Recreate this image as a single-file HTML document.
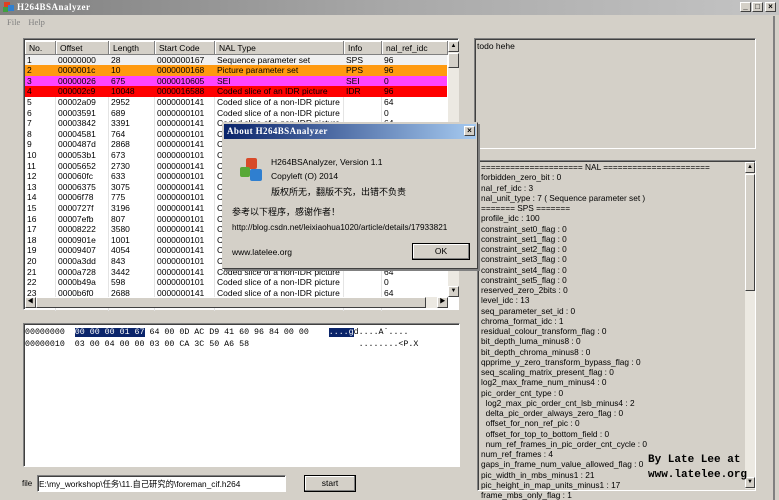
<!DOCTYPE html>
<html><head><meta charset="utf-8">
<style>
*{box-sizing:border-box;margin:0;padding:0}
body{width:779px;height:500px;overflow:hidden;background:#d4d0c8;font-family:"Liberation Sans","Noto Sans CJK SC",sans-serif;font-size:8.5px;color:#000;position:relative}
.abs{position:absolute}
.title{left:0;top:0;width:779px;height:15px;background:linear-gradient(90deg,#808080,#a8a8a8 50%,#c4c4c4)}
.title span{position:absolute;left:17px;top:2px;color:#fff;font:bold 9px "Liberation Serif",serif;letter-spacing:.5px}
.tbtn{position:absolute;top:2px;width:11px;height:10px;background:#d4d0c8;border:1px solid;border-color:#fff #404040 #404040 #fff;font:bold 8px "Liberation Sans";text-align:center;line-height:8px}
.menu{left:7px;top:17px;color:#808080;font:8.5px "Liberation Serif",serif;word-spacing:6px}
.sunk{border:1px solid;border-color:#808080 #fff #fff #808080;box-shadow:inset 1px 1px 0 #404040}
.list{left:23px;top:38px;width:436px;height:272px;background:#fff}
.hdr{position:absolute;top:2px;height:14px;background:#d4d0c8;border-right:1px solid #808080;border-bottom:1px solid #808080;box-shadow:inset 1px 1px 0 #fff;padding:2px 0 0 4px;font-size:8.5px}
.row{position:absolute;left:1px;width:422px;height:10.6px;line-height:10.6px;font-size:8.5px;white-space:nowrap}
.row span{position:absolute;top:0}
.vl{position:absolute;top:16px;width:1px;height:256px;background:#e4e4e4}
.sb{background:#ece9e2}
.arr{position:absolute;width:11px;height:11px;background:#d4d0c8;border:1px solid;border-color:#fff #404040 #404040 #fff;font-size:6px;text-align:center;line-height:9px}
.dlg{left:222px;top:122px;width:256px;height:147px;background:#d4d0c8;border:1px solid;border-color:#d4d0c8 #404040 #404040 #d4d0c8;box-shadow:2px 2px 0 #808080}
.dt{left:1px;top:1px;width:252px;height:15px;background:linear-gradient(90deg,#0a246a,#a6caf0)}
.dt span{position:absolute;left:3px;top:2px;color:#fff;font:bold 9px "Liberation Serif",serif;letter-spacing:.4px}
.txt{font-size:8.5px;white-space:nowrap}
.det{left:477px;top:160px;width:279px;height:331px;background:#d4d0c8;padding:1px 0 0 3px}
.det div{height:10.26px;line-height:10.26px;font-size:8.3px;white-space:nowrap}
.hex{font-family:"Liberation Mono",monospace;font-size:8.3px;white-space:pre}
</style></head><body>
<div class="abs title"><svg style="position:absolute;left:3px;top:2px" width="12" height="11"><rect x="1" y="0" width="6" height="6" fill="#e04020"/><rect x="5" y="3" width="6" height="6" fill="#3080d0"/><rect x="0" y="5" width="5" height="5" fill="#40a040"/></svg><span>H264BSAnalyzer</span>
<div class="tbtn" style="left:740px">_</div><div class="tbtn" style="left:752px">□</div><div class="tbtn" style="left:765px">×</div></div>
<div class="abs menu">File Help</div>

<div class="abs list sunk">
<div class="hdr" style="left:1px;width:31px">No.</div>
<div class="hdr" style="left:32px;width:53px">Offset</div>
<div class="hdr" style="left:85px;width:46px">Length</div>
<div class="hdr" style="left:131px;width:60px">Start Code</div>
<div class="hdr" style="left:191px;width:129px">NAL Type</div>
<div class="hdr" style="left:320px;width:38px">Info</div>
<div class="hdr" style="left:358px;width:66px">nal_ref_idc</div>
<div class="vl" style="left:31px"></div><div class="vl" style="left:84px"></div><div class="vl" style="left:130px"></div><div class="vl" style="left:190px"></div><div class="vl" style="left:319px"></div><div class="vl" style="left:357px"></div>
<div id="rows"></div>
<div class="abs sb" style="left:424px;top:2px;width:11px;height:256px"></div>
<div class="arr" style="left:424px;top:2px">▲</div>
<div class="arr" style="left:424px;top:14px;height:15px"></div>
<div class="arr" style="left:424px;top:247px">▼</div>
<div class="abs sb" style="left:1px;top:258px;width:423px;height:11px"></div>
<div class="arr" style="left:1px;top:258px">◀</div>
<div class="arr" style="left:12px;top:258px;width:390px"></div>
<div class="arr" style="left:413px;top:258px">▶</div>
</div>

<div class="abs sunk" style="left:474px;top:38px;width:282px;height:111px"><div class="txt" style="position:absolute;left:2px;top:2px">todo hehe</div></div>

<div class="abs det sunk">
<div>===================== NAL ======================</div>
<div>forbidden_zero_bit : 0</div><div>nal_ref_idc : 3</div><div>nal_unit_type : 7 ( Sequence parameter set )</div>
<div>======= SPS =======</div><div>profile_idc : 100</div>
<div>constraint_set0_flag : 0</div><div>constraint_set1_flag : 0</div><div>constraint_set2_flag : 0</div><div>constraint_set3_flag : 0</div><div>constraint_set4_flag : 0</div><div>constraint_set5_flag : 0</div>
<div>reserved_zero_2bits : 0</div><div>level_idc : 13</div><div>seq_parameter_set_id : 0</div><div>chroma_format_idc : 1</div><div>residual_colour_transform_flag : 0</div><div>bit_depth_luma_minus8 : 0</div><div>bit_depth_chroma_minus8 : 0</div><div>qpprime_y_zero_transform_bypass_flag : 0</div><div>seq_scaling_matrix_present_flag : 0</div><div>log2_max_frame_num_minus4 : 0</div><div>pic_order_cnt_type : 0</div>
<div>&nbsp;&nbsp;log2_max_pic_order_cnt_lsb_minus4 : 2</div><div>&nbsp;&nbsp;delta_pic_order_always_zero_flag : 0</div><div>&nbsp;&nbsp;offset_for_non_ref_pic : 0</div><div>&nbsp;&nbsp;offset_for_top_to_bottom_field : 0</div><div>&nbsp;&nbsp;num_ref_frames_in_pic_order_cnt_cycle : 0</div>
<div>num_ref_frames : 4</div><div>gaps_in_frame_num_value_allowed_flag : 0</div><div>pic_width_in_mbs_minus1 : 21</div><div>pic_height_in_map_units_minus1 : 17</div><div>frame_mbs_only_flag : 1</div>
</div>
<div class="abs sb" style="left:745px;top:162px;width:10px;height:327px"></div>
<div class="arr" style="left:745px;top:162px;width:10px">▲</div>
<div class="arr" style="left:745px;top:174px;width:10px;height:117px"></div>
<div class="arr" style="left:745px;top:477px;width:10px">▼</div>
<div class="abs" style="left:648px;top:453px;font:bold 11px 'Liberation Mono',monospace;line-height:15px">By Late Lee at<br>www.latelee.org</div>

<div class="abs sunk" style="left:23px;top:323px;width:437px;height:144px;background:#fff">
<div class="hex abs" style="left:1px;top:3px;line-height:11.5px">00000000  <span style="background:#0a246a;color:#fff">00 00 00 01 67</span> 64 00 0D AC D9 41 60 96 84 00 00    <span style="background:#0a246a;color:#fff">....g</span>d....A`....
00000010  03 00 04 00 00 03 00 CA 3C 50 A6 58                      ........&lt;P.X</div>
</div>
<div class="abs txt" style="left:22px;top:479px;font-size:8px">file</div>
<div class="abs sunk" style="left:37px;top:475px;width:249px;height:17px;background:#fff"><div class="txt" style="position:absolute;left:1px;top:2px;font-size:8.3px">E:\my_workshop\任务\11.自己研究的\foreman_cif.h264</div></div>
<div class="abs" style="left:304px;top:475px;width:52px;height:17px;border:1px solid #000;box-shadow:inset -1px -1px 0 #808080,inset 1px 1px 0 #fff;text-align:center;line-height:15px">start</div>
<div class="abs" style="left:773px;top:16px;width:2px;height:484px;background:#808080"></div>

<div class="abs dlg">
<div class="abs dt"><span>About H264BSAnalyzer</span><div class="tbtn" style="left:240px;top:2px">×</div></div>
<svg class="abs" style="left:16px;top:34px" width="26" height="28"><rect x="7" y="1" width="11" height="11" rx="2" fill="#d84a2a"/><rect x="1" y="10" width="10" height="10" rx="2" fill="#58a838"/><rect x="11" y="12" width="12" height="12" rx="2" fill="#2f7fd0"/></svg>
<div class="abs txt" style="left:48px;top:34px">H264BSAnalyzer, Version 1.1</div>
<div class="abs txt" style="left:48px;top:48px">Copyleft (O) 2014</div>
<div class="abs txt" style="left:48px;top:62px;font-size:9px">版权所无，翻版不究，出错不负责</div>
<div class="abs txt" style="left:9px;top:82px;font-size:9px">参考以下程序，感谢作者！</div>
<div class="abs txt" style="left:9px;top:100px;font-size:8.2px">http://blog.csdn.net/leixiaohua1020/article/details/17933821</div>
<div class="abs txt" style="left:9px;top:124px">www.latelee.org</div>
<div class="abs" style="left:189px;top:120px;width:58px;height:17px;border:1px solid #000;box-shadow:inset -1px -1px 0 #808080,inset 1px 1px 0 #fff;text-align:center;line-height:15px">OK</div>
</div>

<script>
var d=[["1","00000000","28","0000000167","Sequence parameter set","SPS","96",""],
["2","0000001c","10","0000000168","Picture parameter set","PPS","96","#ff9a10"],
["3","00000026","675","0000010605","SEI","SEI","0","#ff44ff"],
["4","000002c9","10048","0000016588","Coded slice of an IDR picture","IDR","96","#ff0000"]];
var r=[["00002a09","2952"],["00003591","689"],["00003842","3391"],["00004581","764"],["0000487d","2868"],["000053b1","673"],["00005652","2730"],["000060fc","633"],["00006375","3075"],["00006f78","775"],["0000727f","3196"],["00007efb","807"],["00008222","3580"],["0000901e","1001"],["00009407","4054"],["0000a3dd","843"],["0000a728","3442"],["0000b49a","598"],["0000b6f0","2688"]];
r.forEach(function(x,i){var o=i%2==0;d.push([""+(i+5),x[0],x[1],o?"0000000141":"0000000101","Coded slice of a non-IDR picture","",o?"64":"0",""]);});
var h="",L=[2,33,86,132,192,321,359];
d.forEach(function(x,i){h+='<div class="row" style="top:'+(15.5+i*10.6)+'px;background:'+(x[7]||"transparent")+(i==0?";background:#f0f0f0":"")+'">';
for(var k=0;k<7;k++)h+='<span style="left:'+L[k]+'px">'+x[k]+'</span>';h+='</div>';});
document.getElementById("rows").innerHTML=h;
</script>
</body></html>
